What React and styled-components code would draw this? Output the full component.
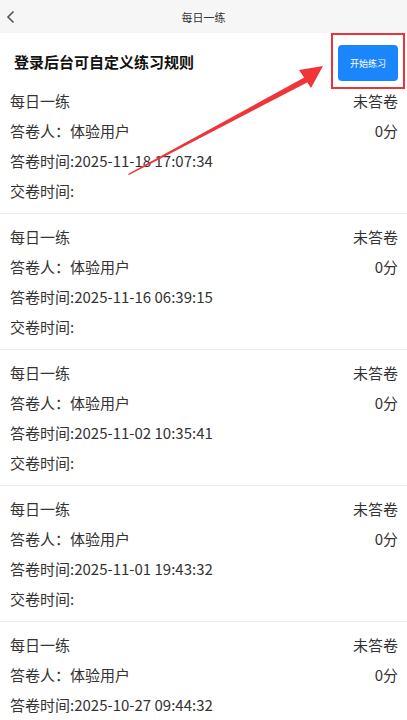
import React from "react";
import styled, { createGlobalStyle } from "styled-components";

const GlobalStyle = createGlobalStyle`
  body {
    margin: 0;
    background: #fff;
    font-family: "Noto Sans CJK SC", "Noto Sans", sans-serif;
    color: #333;
  }
`;

const records = [
  { time: "2025-11-18 17:07:34" },
  { time: "2025-11-16 06:39:15" },
  { time: "2025-11-02 10:35:41" },
  { time: "2025-11-01 19:43:32" },
  { time: "2025-10-27 09:44:32" },
];

function App() {
  return (
    <Page>
      <GlobalStyle />
      <NavBar>
        <BackBtn>
          <svg width="10" height="14" viewBox="0 0 10 14">
            <path d="M7.5 1.5 L2 7 L7.5 12.5" fill="none" stroke="#555" strokeWidth="1.6" />
          </svg>
        </BackBtn>
        <NavTitle>每日一练</NavTitle>
      </NavBar>
      <Header>
        <Title>登录后台可自定义练习规则</Title>
        <StartBtn>开始练习</StartBtn>
        <Highlight />
      </Header>
      <List>
        {records.map((r, i) => (
          <Card key={i}>
            <Row>
              <span>每日一练</span>
              <span>未答卷</span>
            </Row>
            <Row>
              <span>答卷人：体验用户</span>
              <span>0分</span>
            </Row>
            <Row>
              <span>答卷时间:{r.time}</span>
            </Row>
            <Row>
              <span>交卷时间:</span>
            </Row>
          </Card>
        ))}
      </List>
      <Arrow width="407" height="200" viewBox="0 0 407 200">
        <polygon points="128,174 307,76 310,81 129,175" fill="#f0353a" />
        <polygon points="323,66 299,70 311,88" fill="#f0353a" />
      </Arrow>
    </Page>
  );
}

export default App;

const Page = styled.div`
  position: relative;
  width: 407px;
  height: 720px;
  overflow: hidden;
`;

const NavBar = styled.div`
  height: 33px;
  background: #f6f6f6;
  display: flex;
  align-items: center;
  justify-content: center;
  position: relative;
`;

const BackBtn = styled.div`
  position: absolute;
  left: 6px;
  top: 10px;
  display: flex;
`;

const NavTitle = styled.div`
  font-size: 11px;
  color: #333;
`;

const Header = styled.div`
  height: 52px;
  display: flex;
  align-items: center;
  justify-content: space-between;
  padding: 0 9px 0 14px;
  position: relative;
`;

const Title = styled.div`
  font-size: 15px;
  font-weight: 700;
  color: #111;
  margin-top: 4px;
`;

const StartBtn = styled.button`
  width: 60px;
  height: 36px;
  border: none;
  border-radius: 4px;
  background: #1b86fb;
  color: #fff;
  font-family: inherit;
  font-size: 9px;
  padding: 0;
  margin-top: 8px;
`;

const Highlight = styled.div`
  position: absolute;
  left: 331px;
  top: 0;
  width: 70px;
  height: 52px;
  border: 2px solid #e8343b;
`;

const List = styled.div`
  display: flex;
  flex-direction: column;
`;

const Card = styled.div`
  padding: 0 9px 8px 10px;
  border-bottom: 1px solid #ebebeb;
  & + & {
    padding-top: 7px;
  }
`;

const Row = styled.div`
  display: flex;
  justify-content: space-between;
  height: 30px;
  align-items: center;
  font-size: 15px;
  color: #333;
`;

const Arrow = styled.svg`
  position: absolute;
  left: 0;
  top: 0;
  pointer-events: none;
`;
